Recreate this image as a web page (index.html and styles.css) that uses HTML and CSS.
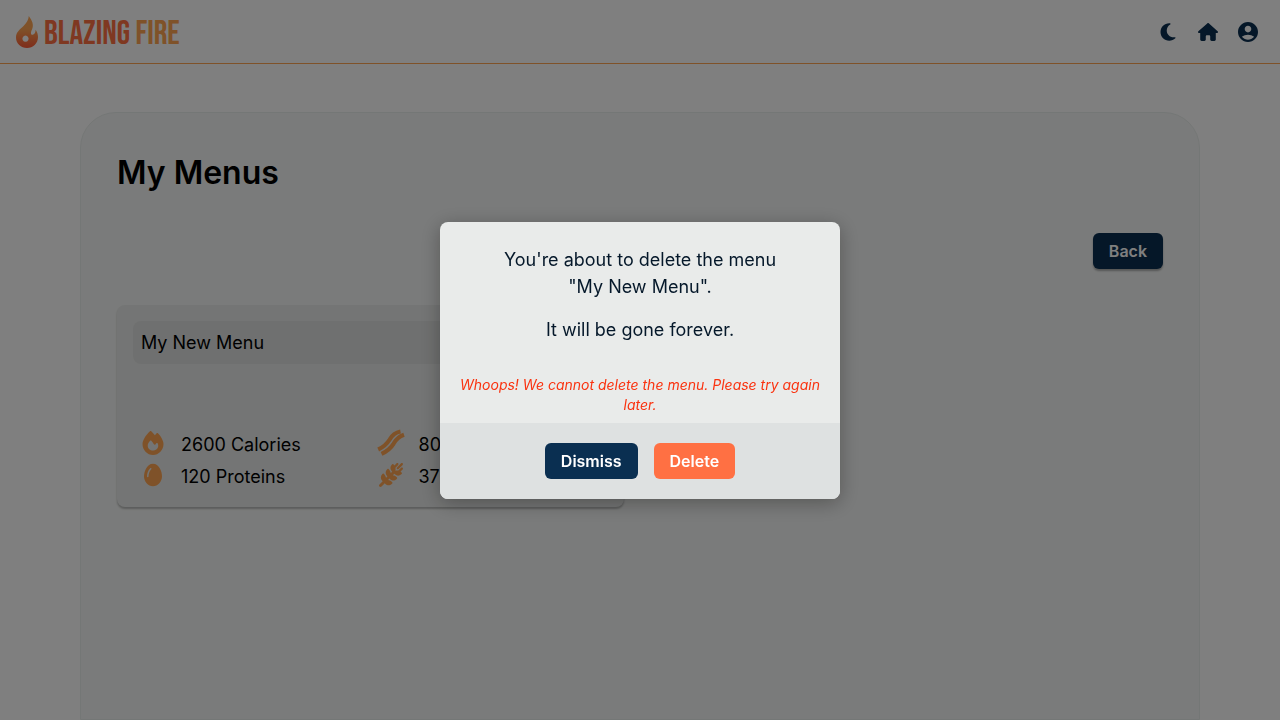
FILE: index.html
```
<!DOCTYPE html>
<html lang="en">
<head>
<meta charset="utf-8">
<meta name="viewport" content="width=device-width, initial-scale=1">
<title>My Menus - Blazing Fire</title>
<link rel="stylesheet" href="styles.css">
</head>
<body class="modal-open">
<header class="topbar">
  <a class="brand" href="#">
    <svg class="brand-flame" viewBox="0 0 22 32" aria-hidden="true">
      <defs><linearGradient id="flame" x1="0" y1="0" x2="0" y2="1"><stop offset="0.4" stop-color="#ffa552"/><stop offset="1" stop-color="#ff5a36"/></linearGradient></defs>
      <path fill="url(#flame)" fill-rule="evenodd" d="M12.8 0C16 4.500 18.200 8.500 16 13.500C14.500 16.500 14.600 19 16.800 18.800C18.800 18.400 19.600 16 19.600 13.800C21.300 16 22 18.800 22 21C22 27.500 17 32 11 32S0 27.500 0 21.500C0 16 4 13.500 8 9.500C10.800 6.500 12.600 3.500 12.800 0ZM9.500 19.600a3.100 3.100 0 1 0 .01 0Z"/>
    </svg>
    <span class="brand-name">BLAZING <span class="brand-accent">FIRE</span></span>
  </a>
  <nav class="tools" aria-label="Main">
    <button class="tool" type="button" aria-label="Dark mode"><svg class="tool-icon" viewBox="0 0 384 512"><path d="M223.500 32C100 32 0 132.300 0 256S100 480 223.500 480c60.600 0 115.500-24.200 155.800-63.400c5-4.900 6.300-12.500 3.100-18.700s-10.100-9.700-17-8.500c-9.800 1.700-19.800 2.600-30.100 2.600c-96.900 0-175.500-78.800-175.500-176c0-65.800 36-123.100 89.300-153.300c6.100-3.500 9.200-10.500 7.700-17.300s-7.300-11.900-14.300-12.500c-6.300-.5-12.600-.8-19-.8z"/></svg></button>
    <a class="tool" href="#" aria-label="Home"><svg class="tool-icon" viewBox="0 0 576 512"><path d="M575.800 255.500c0 18-15 32.100-32 32.100h-32l.7 160.200c0 2.700-.2 5.400-.5 8.100V472c0 22.100-17.900 40-40 40H456c-1.100 0-2.200 0-3.300-.1c-1.400 .1-2.800 .1-4.200 .1H416 392c-22.100 0-40-17.900-40-40V448 384c0-17.700-14.300-32-32-32H256c-17.700 0-32 14.300-32 32v64 24c0 22.100-17.900 40-40 40H160 128.100c-1.500 0-3-.1-4.500-.2c-1.200 .1-2.400 .2-3.600 .2H104c-22.100 0-40-17.900-40-40V360c0-.9 0-1.900 .1-2.800V287.600H32c-18 0-32-14-32-32.100c0-9 3-17 10-24L266.400 8c7-7 15-8 22-8s15 2 21 7L564.800 231.500c8 7 12 15 11 24z"/></svg></a>
    <button class="tool" type="button" aria-label="Account"><svg class="tool-icon" viewBox="2 2 20 20"><path d="M12 2C6.480 2 2 6.480 2 12s4.480 10 10 10 10-4.480 10-10S17.520 2 12 2zm0 3.800c1.930 0 3.300 1.370 3.300 3.300S13.930 12.400 12 12.400s-3.300-1.370-3.300-3.300S10.070 5.800 12 5.800zm0 13.900c-2.030 0-4.430-.82-6.140-2.880C7.550 15.500 9.680 14.700 12 14.700s4.450.8 6.140 2.120C16.430 18.880 14.030 19.700 12 19.700z"/></svg></button>
  </nav>
</header>

<main class="page">
  <section class="panel">
    <h1 class="panel-title">My Menus</h1>
    <div class="panel-actions"><button class="btn btn-primary btn-raised" type="button">Back</button></div>
    <div class="menus">
      <article class="card">
        <h2 class="card-title">My New Menu</h2>
        <ul class="facts">
          <li class="fact"><svg class="fact-icon" viewBox="0 0 448 512" aria-hidden="true"><path d="M159.300 5.400c7.800-7.300 19.900-7.200 27.700 .1c27.600 25.900 53.500 53.800 77.700 84c11-14.400 23.500-30.100 37-42.900c7.900-7.400 20.100-7.400 28 .1c34.600 33 63.900 76.600 84.500 118c20.300 40.800 33.800 82.500 33.800 111.900C448 404.200 348.200 512 224 512C98.400 512 0 404.100 0 276.500c0-38.400 17.800-85.300 45.400-131.700C73.300 97.700 112.700 48.600 159.300 5.400zM225.700 416c25.300 0 47.700-7 68.800-21c42.100-29.400 53.400-88.200 28.100-134.400c-4.500-9-16-9.600-22.500-2l-25.200 29.300c-6.600 7.600-18.500 7.400-24.700-.5c-16.500-21-46-58.500-62.800-79.800c-6.300-8-18.300-8.100-24.700-.1c-33.800 42.500-50.800 69.300-50.800 99.400C112 375.400 162.600 416 225.700 416z"/></svg>2600 Calories</li>
          <li class="fact"><svg class="fact-icon" viewBox="2 2 24 24" aria-hidden="true"><g fill="none" stroke="currentColor" stroke-width="4.200"><path d="M1.200 20.500C7.700 17.500 10.200 14.500 12.700 10.500C15.200 6 18.200 3.500 23.500 2.500"/><path d="M4.500 24.800C11 21.800 14 18.800 16.500 14.800C19 10.300 21.500 7.600 27 5.800"/></g></svg>80 Fats</li>
          <li class="fact"><svg class="fact-icon" viewBox="0 0 384 512" aria-hidden="true"><path d="M192 496C86 496 0 394 0 288C0 176 64 16 192 16s192 160 192 272c0 106-86 208-192 208zM154.800 134c6.500-6 7-16.100 1-22.600s-16.100-7-22.600-1c-23.900 21.800-41.100 52.700-52.300 84.200C69.700 226.100 64 259.700 64 288c0 8.800 7.200 16 16 16s16-7.200 16-16c0-24.500 5-54.400 15.100-82.800c10.100-28.500 25-54.100 43.700-71.200z"/></svg>120 Proteins</li>
          <li class="fact"><svg class="fact-icon" viewBox="0 0 512 512" aria-hidden="true"><path d="M505 41c9.400-9.400 9.400-24.600 0-33.900s-24.600-9.400-33.900 0L383 95c-9.400 9.400-9.400 24.600 0 33.900s24.600 9.400 33.900 0l88-88zM305.500 27.300c-6.200-6.200-16.400-6.200-22.600 0L271.500 38.600c-37.500 37.500-37.500 98.300 0 135.800l10.400 10.400-30.500 30.500c-3.400-27.300-15.500-53.800-36.500-74.800l-11.300-11.300c-6.200-6.200-16.400-6.200-22.600 0l-11.300 11.300c-37.500 37.500-37.500 98.300 0 135.800l10.400 10.400-30.500 30.500c-3.400-27.300-15.500-53.800-36.500-74.800L101.800 231c-6.200-6.200-16.400-6.200-22.600 0L67.900 242.300c-37.500 37.500-37.500 98.300 0 135.800l10.400 10.400L9.400 457.400c-12.500 12.500-12.500 32.800 0 45.300s32.800 12.500 45.300 0l68.900-68.900 12.200 12.200c37.500 37.500 98.300 37.500 135.800 0l11.300-11.300c6.200-6.200 6.200-16.400 0-22.600l-11.300-11.300c-21.800-21.800-49.600-34.100-78.100-36.900l31.900-31.900 12.200 12.200c37.500 37.500 98.300 37.500 135.800 0l11.300-11.300c6.200-6.200 6.200-16.400 0-22.600l-11.300-11.300c-21.800-21.800-49.600-34.100-78.100-36.900l31.900-31.900 12.200 12.200c37.500 37.500 98.300 37.500 135.800 0L486.500 231c6.200-6.200 6.200-16.400 0-22.600L475.200 197c-5.200-5.200-10.600-9.800-16.400-13.900L505 137c9.400-9.400 9.400-24.600 0-33.900s-24.600-9.400-33.900 0l-59.400 59.400c-20.600-4.400-42-3.700-62.300 2.100c6.100-21.300 6.600-43.800 1.400-65.300L409 41c9.400-9.400 9.400-24.600 0-33.900s-24.600-9.400-33.900 0L329.100 52.900c-3.700-5-7.800-9.800-12.400-14.300L305.500 27.300z"/></svg>370 Carbs</li>
        </ul>
      </article>
    </div>
  </section>
</main>

<div class="backdrop">
  <div class="dialog" role="dialog" aria-modal="true" aria-describedby="dialog-text">
    <div class="dialog-body">
      <div class="dialog-text" id="dialog-text">
        <p class="dialog-line">You're about to delete the menu<br>"My New Menu".</p>
        <p class="dialog-line">It will be gone forever.</p>
      </div>
      <p class="dialog-error" role="alert">Whoops! We cannot delete the menu. Please try again later.</p>
    </div>
    <div class="dialog-footer">
      <button class="btn btn-primary" type="button">Dismiss</button>
      <button class="btn btn-danger" type="button">Delete</button>
    </div>
  </div>
</div>
</body>
</html>
```
FILE: styles.css
```
:root {
  --navy: #0a2f51;
  --coral: #ff7043;
  --orange: #ffa552;
}

* { box-sizing: border-box; }

body {
  margin: 0;
  background: #fff;
  color: #000;
  font-family: Inter, "Liberation Sans", sans-serif;
  font-size: 18px;
  line-height: 27px;
}

.modal-open { overflow: hidden; }

.topbar {
  display: flex;
  align-items: center;
  justify-content: space-between;
  height: 64px;
  padding: 0 20px 0 16px;
  border-bottom: 1px solid var(--orange);
}

.brand {
  display: flex;
  align-items: center;
  gap: 6px;
  text-decoration: none;
}

.brand-flame { width: 22px; height: 32px; }

.brand-name {
  padding-top: 4px;
  color: var(--coral);
  font-family: "Bebas Neue", "Roboto Condensed", "Open Sans Condensed", Roboto, sans-serif;
  font-size: 34px;
  font-weight: 400;
  line-height: 32px;
}

.brand-accent { color: var(--orange); }

.tools { display: flex; gap: 16px; }

.tool {
  display: flex;
  align-items: center;
  justify-content: center;
  width: 24px;
  height: 24px;
  padding: 0;
  border: 0;
  background: none;
  color: var(--navy);
}

.tool-icon { width: 20px; height: 20px; fill: currentColor; }

.page { padding: 48px 80px 0; }

.panel {
  min-height: calc(100vh - 112px);
  padding: 36px;
  border: 1px solid #e9eeec;
  border-radius: 36px 36px 0 0;
  background: #f5f7f6;
}

.panel-title {
  margin: 0;
  font-size: 32px;
  font-weight: 600;
  line-height: 48px;
}

.panel-actions {
  display: flex;
  justify-content: flex-end;
  margin: 36px 0;
}

.btn {
  height: 36px;
  padding: 0 16px;
  border: 0;
  border-radius: 6px;
  color: #fff;
  font-family: inherit;
  font-size: 16px;
  font-weight: 600;
  line-height: 24px;
}

.btn-primary { background: var(--navy); }
.btn-danger { background: var(--coral); }
.btn-raised { box-shadow: 0 2px 2px rgba(0, 0, 0, 0.3); }

.menus {
  display: grid;
  grid-template-columns: 1fr 1fr;
  gap: 32px;
}

.card {
  padding: 16px 16px 15px;
  border-radius: 8px;
  background: #e9ebea;
  box-shadow: 0 2px 2px rgba(0, 0, 0, 0.25);
}

.card-title {
  margin: 0 0 64px;
  padding: 8px;
  border-radius: 8px;
  background: #dfe1e0;
  font-size: 18px;
  font-weight: 400;
}

.facts {
  display: grid;
  grid-template-columns: 1fr 1fr;
  margin: 0;
  padding: 0;
  list-style: none;
}

.fact {
  display: flex;
  align-items: center;
  gap: 16px;
  height: 32px;
  padding-left: 8px;
}

.fact-icon {
  width: 24px;
  height: 24px;
  margin-bottom: 2px;
  overflow: visible;
  color: var(--orange);
  fill: currentColor;
}

.backdrop {
  position: fixed;
  inset: 0;
  display: flex;
  align-items: center;
  justify-content: center;
  background: rgba(0, 0, 0, 0.5);
}

.dialog {
  width: 400px;
  max-width: 100%;
  overflow: hidden;
  border-radius: 8px;
  background: #e9ebea;
  box-shadow: 0 4px 20px rgba(0, 0, 0, 0.3);
  text-align: center;
}

.dialog-body { padding: 24px 16px 8px; }

.dialog-text {
  display: grid;
  gap: 16px;
  color: #05182a;
}

.dialog-line { margin: 0; }

.dialog-error {
  margin: 32px 0 0;
  color: #fa3310;
  font-size: 14px;
  font-style: italic;
  line-height: 20px;
}

.dialog-footer {
  display: flex;
  justify-content: center;
  gap: 16px;
  padding: 20px;
  background: #dee1e1;
}
```
